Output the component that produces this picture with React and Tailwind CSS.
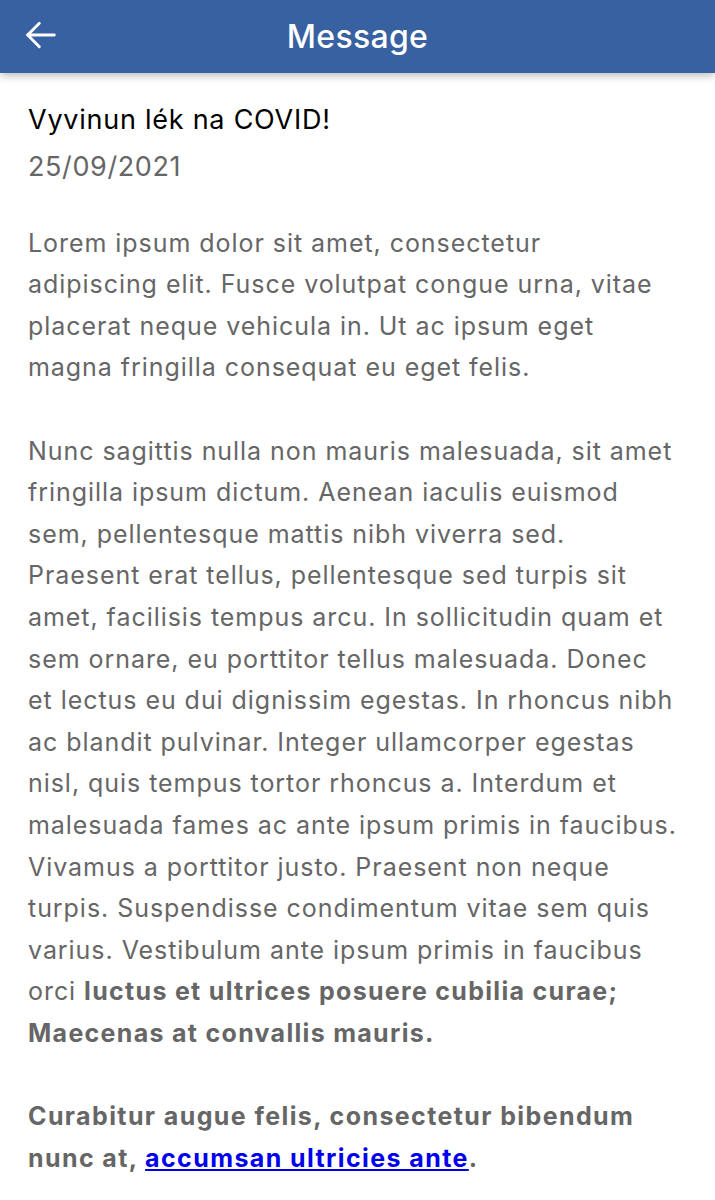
const P1 = [
  'Lorem ipsum dolor sit amet, consectetur',
  'adipiscing elit. Fusce volutpat congue urna, vitae',
  'placerat neque vehicula in. Ut ac ipsum eget',
  'magna fringilla consequat eu eget felis.',
]

const P2 = [
  'Nunc sagittis nulla non mauris malesuada, sit amet',
  'fringilla ipsum dictum. Aenean iaculis euismod',
  'sem, pellentesque mattis nibh viverra sed.',
  'Praesent erat tellus, pellentesque sed turpis sit',
  'amet, facilisis tempus arcu. In sollicitudin quam et',
  'sem ornare, eu porttitor tellus malesuada. Donec',
  'et lectus eu dui dignissim egestas. In rhoncus nibh',
  'ac blandit pulvinar. Integer ullamcorper egestas',
  'nisl, quis tempus tortor rhoncus a. Interdum et',
  'malesuada fames ac ante ipsum primis in faucibus.',
  'Vivamus a porttitor justo. Praesent non neque',
  'turpis. Suspendisse condimentum vitae sem quis',
  'varius. Vestibulum ante ipsum primis in faucibus',
]

function Lines({ lines }) {
  return lines.map((l, i) => (
    <span key={i}>
      {l}
      <br />
    </span>
  ))
}

export default function App() {
  return (
    <div className="min-h-screen bg-white" style={{ fontFamily: 'Inter, "Noto Sans", sans-serif' }}>
      {/* Top bar */}
      <header className="relative h-[73px] bg-[#3761a0] flex items-center justify-center shadow-[0_3px_8px_rgba(0,0,0,0.25)]">
        <button className="absolute left-[21px] top-[15px] text-white">
          <svg width="40" height="40" viewBox="0 0 24 24" fill="none" stroke="currentColor" strokeWidth="1.7" strokeLinecap="round" strokeLinejoin="round">
            <path d="M20 12H4" />
            <path d="M11 5l-7 7 7 7" />
          </svg>
        </button>
        <h1 className="text-white text-[32px] font-medium tracking-[0.3px]">Message</h1>
      </header>

      <main className="pl-[28px] pr-[8px] pt-[24px] pb-8 text-[25px] leading-[41.6px] tracking-[0.95px] text-[#666] whitespace-nowrap">
        <h2 className="text-black text-[27px] leading-[45px] tracking-[0.75px]">Vyvinun lék na COVID!</h2>
        <p className="text-[27px] tracking-[0.6px] mb-[35px] mt-[4px]">25/09/2021</p>

        <p className="mb-[41.6px]">
          <Lines lines={P1} />
        </p>
        <p className="mb-[41.6px]">
          <Lines lines={P2} />
          orci <strong className="font-bold tracking-[1.3px]">luctus et ultrices posuere cubilia curae;</strong>
          <br />
          <strong className="font-bold tracking-[1.3px]">Maecenas at convallis mauris.</strong>
        </p>
        <p className="font-bold tracking-[1.4px]">
          Curabitur augue felis, consectetur bibendum
          <br />
          nunc at, <a href="#" className="text-[#0000ee] underline">accumsan ultricies ante</a>.
        </p>
      </main>
    </div>
  )
}
